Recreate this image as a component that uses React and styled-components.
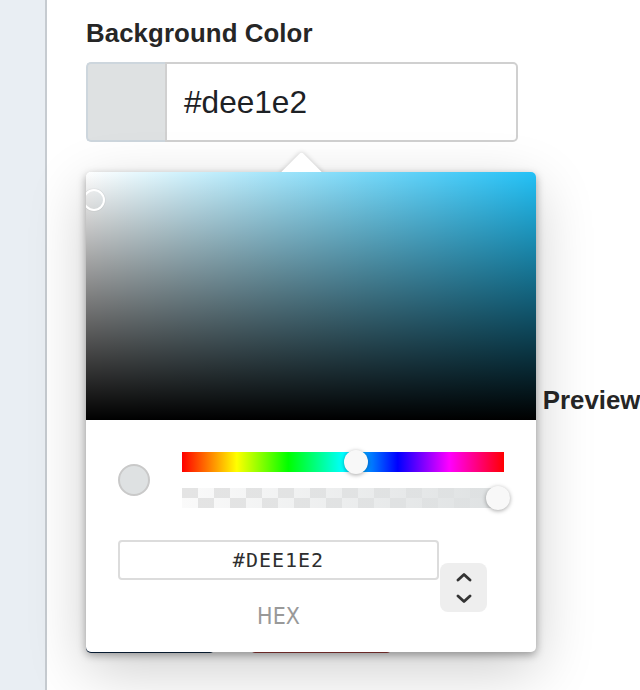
import React from 'react';
import styled, { createGlobalStyle } from 'styled-components';

const GlobalStyle = createGlobalStyle`
  html, body {
    margin: 0;
    padding: 0;
    height: 100%;
    overflow: hidden;
    background: #fff;
  }
  * { box-sizing: border-box; }
`;

const Page = styled.div`
  display: flex;
  min-height: 100vh;
  font-family: 'Liberation Sans', Arial, sans-serif;
  color: #262626;
`;

const Sidebar = styled.aside`
  width: 47px;
  flex-shrink: 0;
  background: #e9eef3;
  border-right: 2px solid #c6cbd0;
`;

const Main = styled.main`
  flex: 1;
  padding: 18px 0 0 39px;
  display: flex;
  flex-direction: column;
`;

const Field = styled.div`
  position: relative;
  width: 432px;
`;

const Label = styled.div`
  font-size: 25.8px;
  font-weight: 700;
  line-height: 31px;
  margin-bottom: 13px;
  letter-spacing: 0.1px;
`;

const ColorInput = styled.div`
  display: flex;
  height: 80px;
`;

const InputSwatch = styled.div`
  width: 79px;
  background: ${(p) => p.$color};
  border: 2px solid #cdd6dd;
  border-right: none;
  border-radius: 5px 0 0 5px;
`;

const InputText = styled.div`
  flex: 1;
  display: flex;
  align-items: center;
  padding-left: 17px;
  border: 2px solid #d0d0d0;
  border-radius: 0 5px 5px 0;
  font-size: 31.6px;
  color: #1d2125;
`;

const Popover = styled.div`
  position: absolute;
  top: 154px;
  left: 0;
  width: 450px;
  background: #fff;
  border-radius: 5px;
  z-index: 5;
  padding-bottom: 24px;
  box-shadow: 0 3px 8px rgba(0, 0, 0, 0.35), 0 18px 60px rgba(0, 0, 0, 0.2);

  &::before {
    content: '';
    position: absolute;
    z-index: -1;
    left: 200px;
    top: -14px;
    width: 31px;
    height: 31px;
    background: #fff;
    border-radius: 3px;
    transform: rotate(45deg);
    box-shadow: 0 0 5px rgba(0, 0, 0, 0.2);
  }
`;

const Saturation = styled.div`
  position: relative;
  height: 248px;
  border-radius: 5px 5px 0 0;
  overflow: hidden;
  background:
    linear-gradient(to top, #000, rgba(0, 0, 0, 0)),
    linear-gradient(to right, #fff, rgba(255, 255, 255, 0)),
    ${(p) => p.$hue};
`;

const SatCursor = styled.div`
  position: absolute;
  width: 22px;
  height: 22px;
  margin: -11px 0 0 -11px;
  border: 2px solid #fff;
  border-radius: 50%;
  box-shadow: 0 0 1px rgba(0, 0, 0, 0.3);
`;

const Controls = styled.div`
  padding: 32px 32px 0;
`;

const SliderRow = styled.div`
  display: flex;
  align-items: center;
  gap: 32px;
`;

const PreviewDot = styled.div`
  width: 32px;
  height: 32px;
  border-radius: 50%;
  background: ${(p) => p.$color};
  border: 2px solid #c9c9c9;
  flex-shrink: 0;
`;

const Sliders = styled.div`
  flex: 1;
  display: flex;
  flex-direction: column;
  gap: 16px;
`;

const Track = styled.div`
  position: relative;
  height: 20px;
`;

const HueTrack = styled(Track)`
  background: linear-gradient(
    to right,
    #f00 0%,
    #ff0 17%,
    #0f0 33%,
    #0ff 50%,
    #00f 67%,
    #f0f 83%,
    #f00 100%
  );
`;

const AlphaTrack = styled(Track)`
  background:
    linear-gradient(to right, rgba(222, 225, 226, 0), ${(p) => p.$color}),
    conic-gradient(#fafafa 25%, #e4e4e4 0 50%, #fafafa 0 75%, #e4e4e4 0) 0 0 / 32px 20px;
`;

const Thumb = styled.div`
  position: absolute;
  top: 50%;
  width: 24px;
  height: 24px;
  margin: -12px 0 0 -12px;
  border-radius: 50%;
  background: #f8f8f8;
  box-shadow: 0 1px 4px rgba(0, 0, 0, 0.35);
`;

const HexRow = styled.div`
  display: flex;
  align-items: flex-start;
  margin-top: 32px;
`;

const HexColumn = styled.div`
  width: 321px;
  display: flex;
  flex-direction: column;
  align-items: center;
`;

const HexInput = styled.div`
  width: 100%;
  height: 40px;
  display: flex;
  align-items: center;
  justify-content: center;
  border: 2px solid #dcdcdc;
  border-radius: 4px;
  font-family: 'DejaVu Sans Mono', 'Liberation Mono', monospace;
  font-size: 20px;
  letter-spacing: 1px;
  color: #2e2e2e;
`;

const HexLabel = styled.div`
  margin-top: 25px;
  font-family: 'DejaVu Sans', sans-serif;
  font-stretch: condensed;
  font-size: 23px;
  line-height: 23px;
  color: #999;
`;

const Stepper = styled.div`
  width: 47px;
  height: 49px;
  margin: 23px 0 0 1px;
  border-radius: 8px;
  background: #eee;
  display: flex;
  flex-direction: column;
  align-items: center;
  justify-content: center;
  gap: 12px;
`;

const Heading = styled.div`
  margin: 243px 0 0 8px;
  font-size: 25.8px;
  font-weight: 700;
  line-height: 31px;
  white-space: nowrap;
`;

const ButtonRow = styled.div`
  display: flex;
  gap: 35px;
  margin-top: 193px;
`;

const Button = styled.button`
  width: ${(p) => p.$width}px;
  height: 44px;
  border: none;
  border-radius: 5px;
  background: ${(p) => p.$bg};
  color: #fff;
  font-family: 'Liberation Sans', Arial, sans-serif;
  font-size: 18px;
`;

const Chevron = ({ down }) => (
  <svg width="16" height="9" viewBox="0 0 16 9">
    <path
      d={down ? 'M2 2 L8 7.5 L14 2' : 'M2 7 L8 1.5 L14 7'}
      fill="none"
      stroke="#333"
      strokeWidth="2.8"
      strokeLinecap="round"
      strokeLinejoin="round"
    />
  </svg>
);

const App = () => {
  const color = '#dee1e2';
  const hue = 195;
  const sat = 0.018;
  const val = 0.886;

  return (
    <>
      <GlobalStyle />
      <Page>
        <Sidebar />
        <Main>
          <Field>
            <Label>Background Color</Label>
            <ColorInput>
              <InputSwatch $color={color} />
              <InputText>{color}</InputText>
            </ColorInput>

            <Popover>
              <Saturation $hue={`hsl(${hue}, 92%, 55%)`}>
                <SatCursor style={{ left: `${sat * 100}%`, top: `${(1 - val) * 100}%` }} />
              </Saturation>
              <Controls>
                <SliderRow>
                  <PreviewDot $color={color} />
                  <Sliders>
                    <HueTrack>
                      <Thumb style={{ left: `${(hue / 360) * 100}%` }} />
                    </HueTrack>
                    <AlphaTrack $color={color}>
                      <Thumb style={{ left: 'calc(100% - 6px)' }} />
                    </AlphaTrack>
                  </Sliders>
                </SliderRow>
                <HexRow>
                  <HexColumn>
                    <HexInput>#DEE1E2</HexInput>
                    <HexLabel>HEX</HexLabel>
                  </HexColumn>
                  <Stepper>
                    <Chevron />
                    <Chevron down />
                  </Stepper>
                </HexRow>
              </Controls>
            </Popover>
          </Field>

          <Heading>Customize Your Chat Widget Theme Preview</Heading>

          <ButtonRow>
            <Button $width={129} $bg="#0c2848">Save</Button>
            <Button $width={142} $bg="#a3403e">Reset</Button>
          </ButtonRow>
        </Main>
      </Page>
    </>
  );
};

export default App;
